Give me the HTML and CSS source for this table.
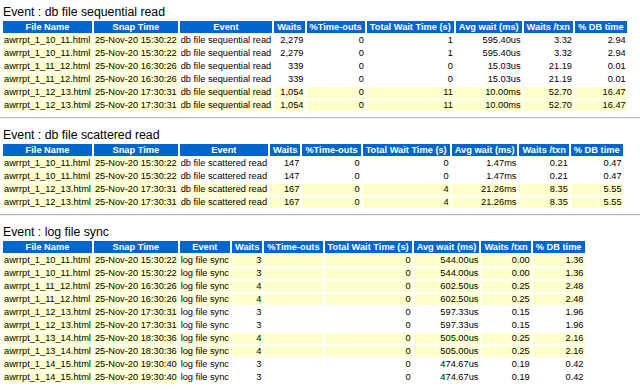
FILE: index.html
```html
<!DOCTYPE html>
<html lang="en">
<head>
    <meta charset="UTF-8">
    <title>AWR Wait Events</title>
    <link rel="stylesheet" href="styles.css">
</head>
<body>
    <section class="event">
        <h3>Event : db file sequential read</h3>
        <table class="awr">
            <tr>
                <th>File Name</th><th>Snap Time</th><th>Event</th><th>Waits</th><th>%Time-outs</th>
                <th>Total Wait Time (s)</th><th>Avg wait (ms)</th><th>Waits /txn</th><th>% DB time</th>
            </tr>
            <tr><td class="key">awrrpt_1_10_11.html</td><td class="key">25-Nov-20 15:30:22</td><td>db file sequential read</td><td class="num">2,279</td><td class="num">0</td><td class="num">1</td><td class="num">595.40us</td><td class="num">3.32</td><td class="num">2.94</td></tr>
            <tr><td class="key">awrrpt_1_10_11.html</td><td class="key">25-Nov-20 15:30:22</td><td>db file sequential read</td><td class="num">2,279</td><td class="num">0</td><td class="num">1</td><td class="num">595.40us</td><td class="num">3.32</td><td class="num">2.94</td></tr>
            <tr><td class="key">awrrpt_1_11_12.html</td><td class="key">25-Nov-20 16:30:26</td><td>db file sequential read</td><td class="num">339</td><td class="num">0</td><td class="num">0</td><td class="num">15.03us</td><td class="num">21.19</td><td class="num">0.01</td></tr>
            <tr><td class="key">awrrpt_1_11_12.html</td><td class="key">25-Nov-20 16:30:26</td><td>db file sequential read</td><td class="num">339</td><td class="num">0</td><td class="num">0</td><td class="num">15.03us</td><td class="num">21.19</td><td class="num">0.01</td></tr>
            <tr class="hl"><td class="key">awrrpt_1_12_13.html</td><td class="key">25-Nov-20 17:30:31</td><td>db file sequential read</td><td class="num">1,054</td><td class="num">0</td><td class="num">11</td><td class="num">10.00ms</td><td class="num">52.70</td><td class="num">16.47</td></tr>
            <tr class="hl"><td class="key">awrrpt_1_12_13.html</td><td class="key">25-Nov-20 17:30:31</td><td>db file sequential read</td><td class="num">1,054</td><td class="num">0</td><td class="num">11</td><td class="num">10.00ms</td><td class="num">52.70</td><td class="num">16.47</td></tr>
        </table>
    </section>
    <hr>

    <section class="event">
        <h3>Event : db file scattered read</h3>
        <table class="awr">
            <tr>
                <th>File Name</th><th>Snap Time</th><th>Event</th><th>Waits</th><th>%Time-outs</th>
                <th>Total Wait Time (s)</th><th>Avg wait (ms)</th><th>Waits /txn</th><th>% DB time</th>
            </tr>
            <tr><td class="key">awrrpt_1_10_11.html</td><td class="key">25-Nov-20 15:30:22</td><td>db file scattered read</td><td class="num">147</td><td class="num">0</td><td class="num">0</td><td class="num">1.47ms</td><td class="num">0.21</td><td class="num">0.47</td></tr>
            <tr><td class="key">awrrpt_1_10_11.html</td><td class="key">25-Nov-20 15:30:22</td><td>db file scattered read</td><td class="num">147</td><td class="num">0</td><td class="num">0</td><td class="num">1.47ms</td><td class="num">0.21</td><td class="num">0.47</td></tr>
            <tr class="hl"><td class="key">awrrpt_1_12_13.html</td><td class="key">25-Nov-20 17:30:31</td><td>db file scattered read</td><td class="num">167</td><td class="num">0</td><td class="num">4</td><td class="num">21.26ms</td><td class="num">8.35</td><td class="num">5.55</td></tr>
            <tr class="hl"><td class="key">awrrpt_1_12_13.html</td><td class="key">25-Nov-20 17:30:31</td><td>db file scattered read</td><td class="num">167</td><td class="num">0</td><td class="num">4</td><td class="num">21.26ms</td><td class="num">8.35</td><td class="num">5.55</td></tr>
        </table>
    </section>
    <hr>

    <section class="event">
        <h3>Event : log file sync</h3>
        <table class="awr">
            <tr>
                <th>File Name</th><th>Snap Time</th><th>Event</th><th>Waits</th><th>%Time-outs</th>
                <th>Total Wait Time (s)</th><th>Avg wait (ms)</th><th>Waits /txn</th><th>% DB time</th>
            </tr>
            <tr class="hl"><td class="key">awrrpt_1_10_11.html</td><td class="key">25-Nov-20 15:30:22</td><td>log file sync</td><td class="num">3</td><td class="num"></td><td class="num">0</td><td class="num">544.00us</td><td class="num">0.00</td><td class="num">1.36</td></tr>
            <tr class="hl"><td class="key">awrrpt_1_10_11.html</td><td class="key">25-Nov-20 15:30:22</td><td>log file sync</td><td class="num">3</td><td class="num"></td><td class="num">0</td><td class="num">544.00us</td><td class="num">0.00</td><td class="num">1.36</td></tr>
            <tr class="hl"><td class="key">awrrpt_1_11_12.html</td><td class="key">25-Nov-20 16:30:26</td><td>log file sync</td><td class="num">4</td><td class="num"></td><td class="num">0</td><td class="num">602.50us</td><td class="num">0.25</td><td class="num">2.48</td></tr>
            <tr class="hl"><td class="key">awrrpt_1_11_12.html</td><td class="key">25-Nov-20 16:30:26</td><td>log file sync</td><td class="num">4</td><td class="num"></td><td class="num">0</td><td class="num">602.50us</td><td class="num">0.25</td><td class="num">2.48</td></tr>
            <tr><td class="key">awrrpt_1_12_13.html</td><td class="key">25-Nov-20 17:30:31</td><td>log file sync</td><td class="num">3</td><td class="num"></td><td class="num">0</td><td class="num">597.33us</td><td class="num">0.15</td><td class="num">1.96</td></tr>
            <tr><td class="key">awrrpt_1_12_13.html</td><td class="key">25-Nov-20 17:30:31</td><td>log file sync</td><td class="num">3</td><td class="num"></td><td class="num">0</td><td class="num">597.33us</td><td class="num">0.15</td><td class="num">1.96</td></tr>
            <tr class="hl"><td class="key">awrrpt_1_13_14.html</td><td class="key">25-Nov-20 18:30:36</td><td>log file sync</td><td class="num">4</td><td class="num"></td><td class="num">0</td><td class="num">505.00us</td><td class="num">0.25</td><td class="num">2.16</td></tr>
            <tr class="hl"><td class="key">awrrpt_1_13_14.html</td><td class="key">25-Nov-20 18:30:36</td><td>log file sync</td><td class="num">4</td><td class="num"></td><td class="num">0</td><td class="num">505.00us</td><td class="num">0.25</td><td class="num">2.16</td></tr>
            <tr><td class="key">awrrpt_1_14_15.html</td><td class="key">25-Nov-20 19:30:40</td><td>log file sync</td><td class="num">3</td><td class="num"></td><td class="num">0</td><td class="num">474.67us</td><td class="num">0.19</td><td class="num">0.42</td></tr>
            <tr><td class="key">awrrpt_1_14_15.html</td><td class="key">25-Nov-20 19:30:40</td><td>log file sync</td><td class="num">3</td><td class="num"></td><td class="num">0</td><td class="num">474.67us</td><td class="num">0.19</td><td class="num">0.42</td></tr>
        </table>
    </section>
</body>
</html>
```

FILE: styles.css
```css
* {
    margin: 0;
    padding: 0;
    box-sizing: border-box;
}

body {
    font-family: "Liberation Sans", Arial, sans-serif;
    color: #000;
    background: #fff;
    padding-top: 5px;
}

.event {
    padding-left: 1px;
}

.event h3 {
    font-size: 12.3px;
    font-weight: normal;
    line-height: 14px;
    padding-left: 2px;
}

hr {
    border: 0;
    border-top: 1px solid #b8b8b8;
    border-bottom: 1px solid #f0f0f0;
    margin: 4px 0 9px;
}

.awr {
    border-collapse: separate;
    border-spacing: 2px;
    font-size: 9.25px;
    white-space: nowrap;
}

.awr th {
    background: #0066cc;
    color: #fff;
    font-weight: bold;
    height: 12px;
    line-height: 12px;
    padding: 0 3px;
    text-align: center;
}

.awr td {
    height: 11px;
    line-height: 11px;
    padding: 0 1px;
    text-align: left;
    background: #fff;
}

.awr td.num {
    text-align: right;
}

.awr td.key,
.awr tr.hl td {
    background: #ffffcc;
}
```
